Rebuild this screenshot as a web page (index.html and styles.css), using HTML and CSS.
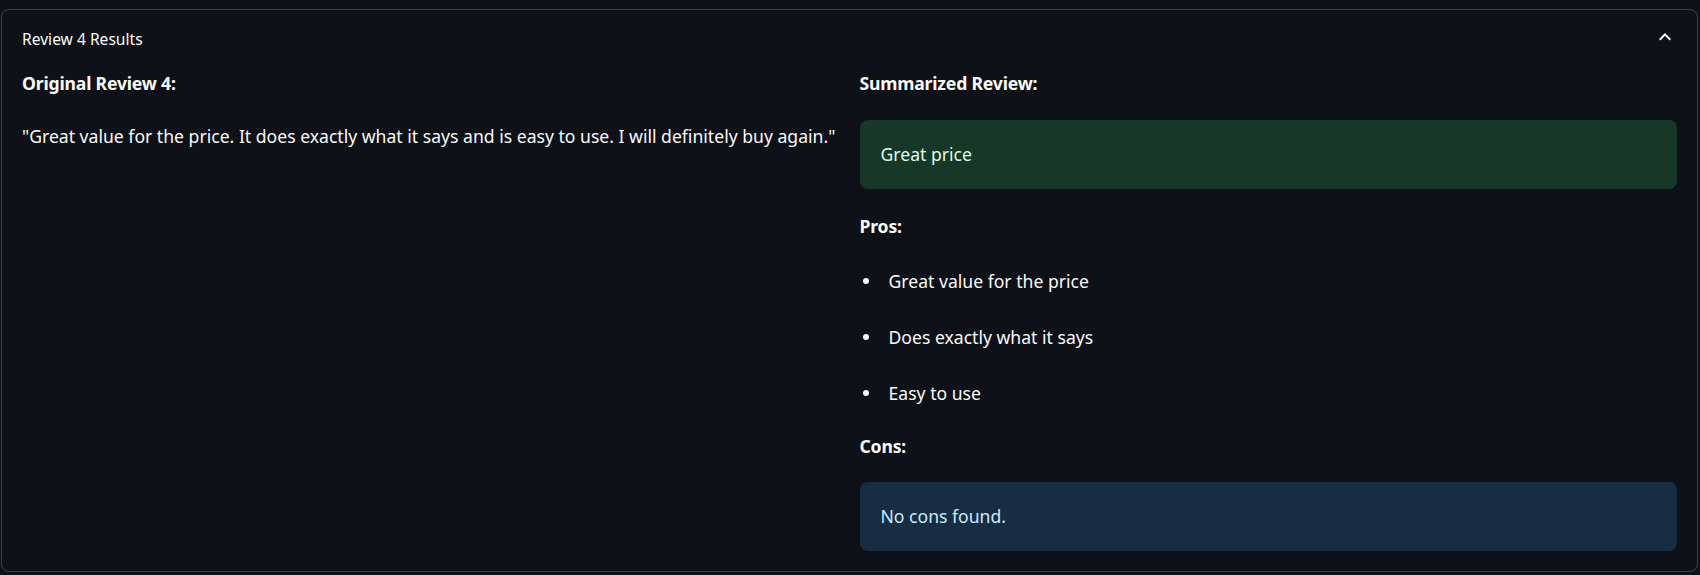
FILE: index.html
```html
<!DOCTYPE html>
<html lang="en">
<head>
<meta charset="utf-8">
<title>Review 4 Results</title>
<link rel="stylesheet" href="styles.css">
</head>
<body>
<details class="expander" open>
  <summary class="exp-header">
    <span class="exp-title">Review 4 Results</span>
    <svg class="exp-chevron" width="24" height="24" viewBox="0 0 24 24" aria-hidden="true"><path d="M12 8l-6 6 1.41 1.41L12 10.83l4.59 4.58L18 14z" fill="#fafafa"/></svg>
  </summary>
  <div class="exp-body">
    <div class="col">
      <p class="heading">Original Review 4:</p>
      <p class="quote">"Great value for the price. It does exactly what it says and is easy to use. I will definitely buy again."</p>
    </div>
    <div class="col">
      <p class="heading">Summarized Review:</p>
      <div class="alert alert-success">Great price</div>
      <p class="heading heading-pros">Pros:</p>
      <ul class="pros">
        <li>Great value for the price</li>
        <li>Does exactly what it says</li>
        <li>Easy to use</li>
      </ul>
      <p class="heading heading-cons">Cons:</p>
      <div class="alert alert-info">No cons found.</div>
    </div>
  </div>
</details>
</body>
</html>
```
FILE: styles.css
```css
html, body {
  margin: 0;
  padding: 0;
  background: #0e1117;
  color: #fafafa;
  font-family: "Noto Sans", "Open Sans", sans-serif;
}

body {
  padding: 9px 2px 0 1px;
  height: 575px;
  box-sizing: border-box;
  overflow: hidden;
}

.expander {
  border: 1px solid rgba(250, 250, 250, 0.2);
  border-radius: 8px;
}

.exp-header {
  list-style: none;
  display: flex;
  align-items: center;
  justify-content: space-between;
  height: 59px;
  padding: 0 20px 0 20px;
  cursor: pointer;
}

.exp-header::-webkit-details-marker { display: none; }

.exp-title {
  font-size: 15.6px;
  line-height: 20px;
  margin-top: -2px;
}

.exp-chevron {
  display: block;
  margin-top: -5px;
  margin-right: 0.5px;
}

.exp-body {
  display: grid;
  grid-template-columns: 1fr 1fr;
  column-gap: 20px;
  padding: 0 20px 20px 20px;
}

.col {
  display: flex;
  flex-direction: column;
  min-width: 0;
}

.heading,
.quote,
.pros li,
.alert {
  font-size: 17.6px;
  line-height: 28px;
}

.heading {
  margin: 0;
  font-weight: 700;
  letter-spacing: -0.18px;
}

.quote {
  margin: 25px 0 0;
}

.alert {
  border-radius: 8px;
  height: 69px;
  padding: 0 20px 1px 21px;
  display: flex;
  align-items: center;
  box-sizing: border-box;
}

.alert-success {
  margin-top: 23px;
  background: #173828;
  color: #dffde9;
}

.alert-info {
  margin-top: 22.5px;
  background: #172d43;
  color: #c7ebff;
}

.heading-pros { margin-top: 22.5px; }
.heading-cons { margin-top: 25px; }

.pros {
  list-style: none;
  margin: 27px 0 0;
  padding: 0;
  display: flex;
  flex-direction: column;
  gap: 28px;
}

.pros li {
  position: relative;
  padding-left: 29px;
}

.pros li::before {
  content: "";
  position: absolute;
  left: 3.5px;
  top: 11px;
  width: 6px;
  height: 6px;
  border-radius: 50%;
  background: #fafafa;
}
```
